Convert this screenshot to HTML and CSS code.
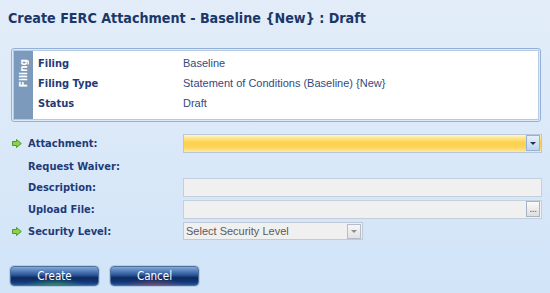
FILE: index.html
```html
<!DOCTYPE html>
<html>
<head>
<meta charset="utf-8">
<link rel="stylesheet" href="styles.css">
</head>
<body>
<div class="page">
  <h1 class="title">Create FERC Attachment - Baseline {New} : Draft</h1>

  <div class="box">
    <div class="box-inner">
      <div class="band"><span class="band-text">Filing</span></div>
      <div class="info">
        <div class="info-label">Filing</div><div class="info-value">Baseline</div>
        <div class="info-label">Filing Type</div><div class="info-value">Statement of Conditions (Baseline) {New}</div>
        <div class="info-label">Status</div><div class="info-value">Draft</div>
      </div>
    </div>
  </div>

  <div class="form">
    <div class="req"><svg width="10" height="9" viewBox="0 0 10 9"><path d="M0.5 2.5 H4.5 V0.5 L9.3 4.5 L4.5 8.5 V6.5 H0.5 Z" fill="#8fd14f" stroke="#4a9a28" stroke-width="1"/></svg></div>
    <div class="label">Attachment:</div>
    <div class="field field-yellow"><span class="drop drop-blue"><i class="tri tri-dark"></i></span></div>

    <div class="req"></div>
    <div class="label label-low">Request Waiver:</div>
    <div></div>

    <div class="req"></div>
    <div class="label">Description:</div>
    <div class="field field-grey"></div>

    <div class="req"></div>
    <div class="label">Upload File:</div>
    <div class="field field-grey"><span class="drop drop-dots">...</span></div>

    <div class="req"><svg width="10" height="9" viewBox="0 0 10 9"><path d="M0.5 2.5 H4.5 V0.5 L9.3 4.5 L4.5 8.5 V6.5 H0.5 Z" fill="#8fd14f" stroke="#4a9a28" stroke-width="1"/></svg></div>
    <div class="label">Security Level:</div>
    <div class="select"><span class="select-text">Select Security Level</span><span class="drop drop-grey"><i class="tri tri-grey"></i></span></div>
  </div>

  <div class="actions">
    <button class="btn btn-create">Create</button>
    <button class="btn btn-cancel">Cancel</button>
  </div>
</div>
</body>
</html>
```

FILE: styles.css
```css
html, body {
  margin: 0;
  padding: 0;
}
body {
  width: 550px;
  height: 293px;
  overflow: hidden;
  background: linear-gradient(#e3edf9, #d1e4f8);
}
.page {
  display: flex;
  flex-direction: column;
}
.title {
  margin: 0;
  padding: 10px 8px 0 8px;
  height: 17px;
  line-height: 17px;
  font-family: "DejaVu Sans Condensed", "DejaVu Sans", sans-serif;
  font-stretch: condensed;
  font-weight: bold;
  font-size: 14.2px;
  color: #1b3768;
}
.box {
  margin: 21px 9px 0 11px;
  border: 1px solid #93b1d8;
  border-radius: 3px;
  padding: 1px;
  background: #dfeaf8;
}
.box-inner {
  display: flex;
  border: 1px solid #b6cae4;
  background: #ffffff;
  height: 68px;
}
.band {
  width: 19px;
  background: #7c9abb;
  display: flex;
  flex-direction: column;
  align-items: center;
}
.band-text {
  margin-top: 8px;
  writing-mode: vertical-rl;
  transform: rotate(180deg);
  font-family: "Liberation Sans Narrow", "DejaVu Sans Condensed", sans-serif;
  font-size: 10px;
  font-weight: bold;
  color: #ffffff;
  line-height: 19px;
}
.info {
  flex: 1;
  display: grid;
  grid-template-columns: 145px 1fr;
  grid-auto-rows: 20px;
  align-items: center;
  padding: 2px 0 0 5px;
}
.info-label, .label {
  font-family: "DejaVu Sans Condensed", "DejaVu Sans", sans-serif;
  font-stretch: condensed;
  font-weight: bold;
  font-size: 11px;
  color: #1f3b78;
}
.label-low {
  padding-top: 3px;
}
.info-value {
  font-family: "Liberation Sans", Arial, sans-serif;
  font-size: 11px;
  color: #34497e;
}
.form {
  margin-top: 10px;
  padding: 0 8px 0 12px;
  display: grid;
  grid-template-columns: 16px 155px 1fr;
  grid-auto-rows: 22px;
  align-items: center;
}
.req {
  display: flex;
  align-items: center;
  height: 9px;
}
.req svg {
  display: block;
}
.field {
  position: relative;
  height: 17px;
  box-sizing: content-box;
  display: flex;
  justify-content: flex-end;
  align-items: center;
}
.field-yellow {
  border: 1px solid #bcc7d6;
  background: linear-gradient(#fff6d2 0%, #ffe58e 18%, #fdd14e 45%, #fdd45a 70%, #ffe9a4 100%);
}
.field-grey {
  border: 1px solid #c4cfdc;
  background: #f0f0f0;
}
.drop {
  box-sizing: border-box;
  width: 14px;
  height: 16px;
  margin-right: 1px;
  display: flex;
  align-items: center;
  justify-content: center;
}
.drop-blue {
  border: 1px solid #94b2d9;
  background: linear-gradient(#e6effb, #bcd5f2);
}
.drop-dots {
  border: 1px solid #a7b4c4;
  background: linear-gradient(#fafafa, #dedede);
  font-family: "Liberation Sans", Arial, sans-serif;
  font-size: 10px;
  line-height: 10px;
  color: #555;
  align-items: flex-end;
  padding-bottom: 2px;
  letter-spacing: -0.5px;
}
.drop-grey {
  border: 1px solid #b5bdc8;
  background: linear-gradient(#f7f7f7, #e1e1e1);
  height: 15px;
}
.tri {
  display: block;
  width: 0;
  height: 0;
  border-left: 3px solid transparent;
  border-right: 3px solid transparent;
  border-top: 3px solid #1f2f55;
}
.tri-grey {
  border-top-color: #8a8f96;
}
.select {
  width: 178px;
  height: 16px;
  border: 1px solid #c0c9d5;
  background: #f0f0f0;
  display: flex;
  align-items: center;
  justify-content: space-between;
}
.select-text {
  padding-left: 2px;
  font-family: "Liberation Sans", Arial, sans-serif;
  font-size: 11px;
  color: #5a5a5a;
}
.actions {
  margin-top: 24px;
  padding-left: 10px;
  display: flex;
  gap: 11px;
}
.btn {
  width: 89px;
  height: 20px;
  margin: 0;
  padding: 0;
  border: 1px solid #4f6f9c;
  border-radius: 4px;
  box-shadow: 0 0 0 1px #b7cbe4;
  font-family: "Liberation Sans Narrow", "DejaVu Sans Condensed", sans-serif;
  font-size: 11.5px;
  color: #ffffff;
  line-height: 18px;
  cursor: pointer;
}
.btn-create {
  background:
    radial-gradient(ellipse 35% 35% at 50% 100%, rgba(60, 170, 90, 0.6), rgba(60, 170, 90, 0) 100%),
    linear-gradient(#86a8d6 0%, #4f7bb8 25%, #2d5596 45%, #0c2860 60%, #123a78 85%, #2a5795 100%);
}
.btn-cancel {
  background:
    radial-gradient(ellipse 35% 35% at 50% 100%, rgba(170, 70, 90, 0.55), rgba(170, 70, 90, 0) 100%),
    linear-gradient(#86a8d6 0%, #4f7bb8 25%, #2d5596 45%, #0c2860 60%, #123a78 85%, #2a5795 100%);
}
```
